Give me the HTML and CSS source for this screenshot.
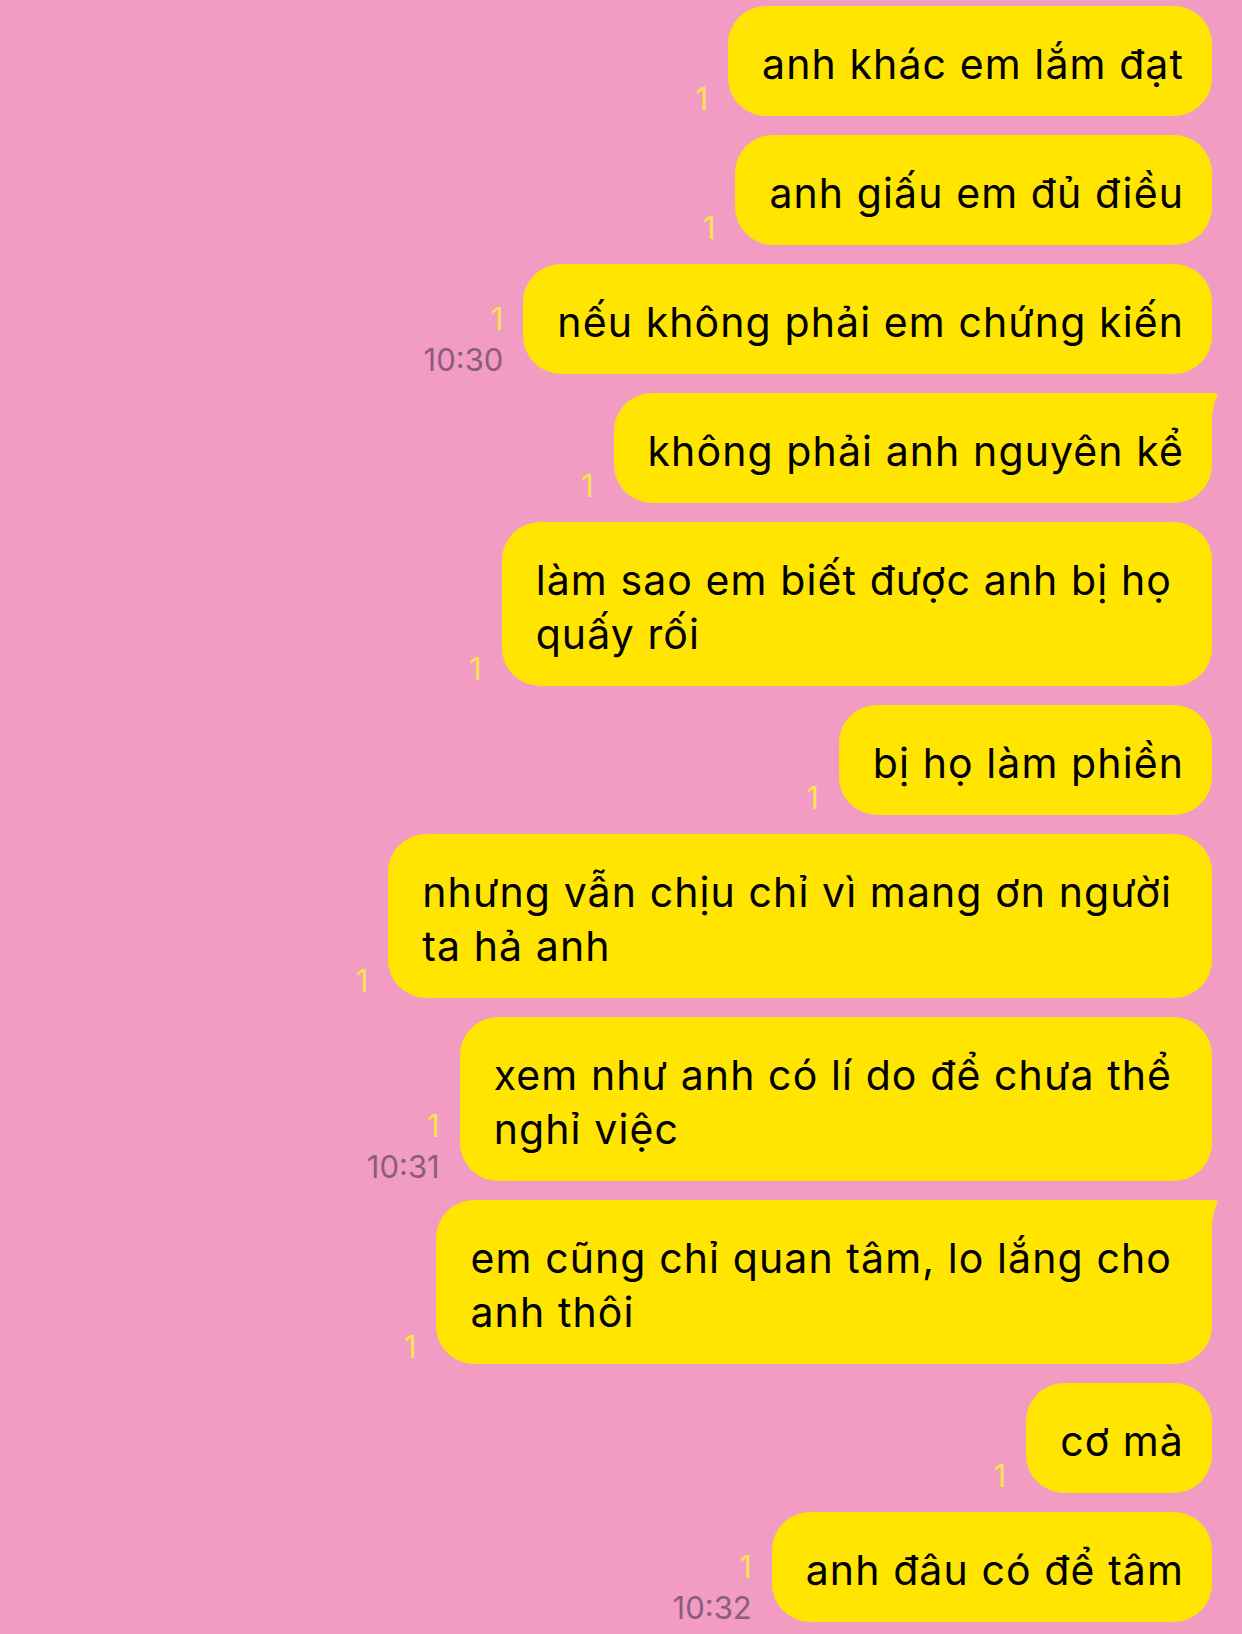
FILE: index.html
```html
<!DOCTYPE html>
<html lang="vi">
<head>
<meta charset="utf-8">
<title>Chat</title>
<link rel="stylesheet" href="styles.css">
</head>
<body>
<main class="chat">
  <div class="row">
    <div class="meta"><span class="read">1</span></div>
    <div class="bubble">anh khác em lắm đạt</div>
  </div>
  <div class="row">
    <div class="meta"><span class="read">1</span></div>
    <div class="bubble">anh giấu em đủ điều</div>
  </div>
  <div class="row">
    <div class="meta"><span class="read">1</span><span class="time">10:30</span></div>
    <div class="bubble">nếu không phải em chứng kiến</div>
  </div>
  <div class="row">
    <div class="meta"><span class="read">1</span></div>
    <div class="bubble tail">không phải anh nguyên kể<svg class="tail-mark" width="22" height="60" viewBox="0 0 22 60"><path d="M0 0 L14 0 Q17 0 18 2 Q11 12 10 54 L0 54 Z" fill="#ffe500"/></svg></div>
  </div>
  <div class="row">
    <div class="meta"><span class="read">1</span></div>
    <div class="bubble multi">làm sao em biết được anh bị họ<br>quấy rối</div>
  </div>
  <div class="row">
    <div class="meta"><span class="read">1</span></div>
    <div class="bubble">bị họ làm phiền</div>
  </div>
  <div class="row">
    <div class="meta"><span class="read">1</span></div>
    <div class="bubble multi">nhưng vẫn chịu chỉ vì mang ơn người<br>ta hả anh</div>
  </div>
  <div class="row">
    <div class="meta"><span class="read">1</span><span class="time">10:31</span></div>
    <div class="bubble multi">xem như anh có lí do để chưa thể<br>nghỉ việc</div>
  </div>
  <div class="row">
    <div class="meta"><span class="read">1</span></div>
    <div class="bubble multi tail">em cũng chỉ quan tâm, lo lắng cho<br>anh thôi<svg class="tail-mark" width="22" height="60" viewBox="0 0 22 60"><path d="M0 0 L14 0 Q17 0 18 2 Q11 12 10 54 L0 54 Z" fill="#ffe500"/></svg></div>
  </div>
  <div class="row">
    <div class="meta"><span class="read">1</span></div>
    <div class="bubble">cơ mà</div>
  </div>
  <div class="row">
    <div class="meta"><span class="read">1</span><span class="time">10:32</span></div>
    <div class="bubble">anh đâu có để tâm</div>
  </div>
</main>
</body>
</html>
```

FILE: styles.css
```css
html, body {
  margin: 0;
  padding: 0;
}

body {
  background: #f29cc3;
  font-family: Inter, "Noto Sans", "Liberation Sans", sans-serif;
  width: 1242px;
  height: 1634px;
  overflow: hidden;
}

.chat {
  display: flex;
  flex-direction: column;
  gap: 19px;
  padding: 6px 30px 0 0;
}

.row {
  display: flex;
  justify-content: flex-end;
  align-items: flex-end;
  gap: 20px;
}

.meta {
  display: flex;
  flex-direction: column;
  align-items: flex-end;
}

.read {
  color: #fae44c;
  font-size: 31px;
  line-height: 38px;
}

.read:last-child {
  margin-bottom: -2px;
}

.time {
  color: #8c5c7b;
  font-size: 31px;
  line-height: 39px;
  padding-top: 2px;
  margin-bottom: -5px;
}

.bubble {
  position: relative;
  background: #ffe500;
  color: #000;
  border-radius: 38px;
  padding: 31px 28px 25px 34px;
  font-size: 41px;
  letter-spacing: 1.1px;
  line-height: 54px;
  white-space: nowrap;
}

.bubble.multi {
  padding-right: 40px;
}

.bubble.tail {
  border-top-right-radius: 0;
}

.tail-mark {
  position: absolute;
  top: 0;
  right: -10px;
}
```
